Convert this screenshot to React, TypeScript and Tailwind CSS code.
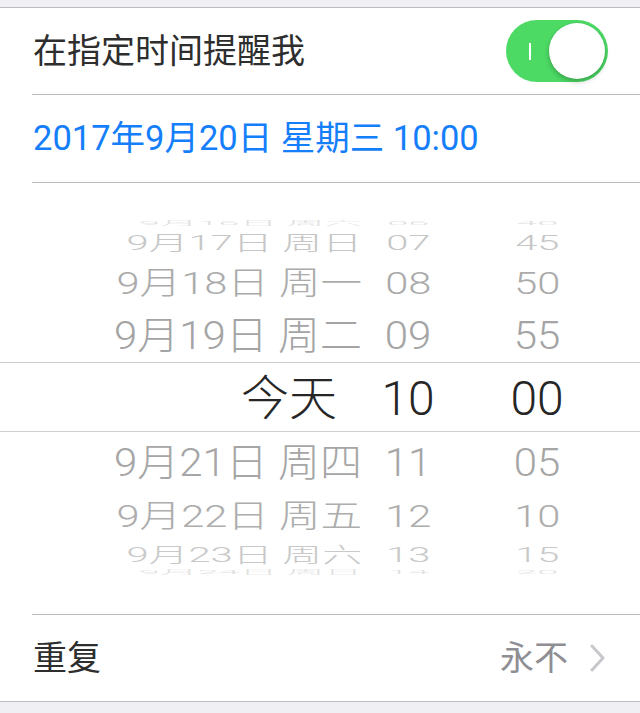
import React from "react";

type Row = {
  d: string;
  h: string;
  m: string;
  box: string;
  color: string;
  sx: string;
};

const top: Row[] = [
  { d: "9月16日 周六", h: "06", m: "40", box: "h-[8px]", color: "text-[#e0e0e0]", sx: "scale-x-[0.9] scale-y-[0.14]" },
  { d: "9月17日 周日", h: "07", m: "45", box: "h-[29px]", color: "text-[#c6c6c6]", sx: "scale-x-[0.95] scale-y-[0.5] translate-y-[1px]" },
  { d: "9月18日 周一", h: "08", m: "50", box: "h-[50px]", color: "text-[#ababab]", sx: "scale-x-[0.99] scale-y-[0.76] translate-y-[2px]" },
  { d: "9月19日 周二", h: "09", m: "55", box: "h-[56px]", color: "text-[#a4a4a4]", sx: "scale-x-[1] scale-y-[0.93] translate-y-[2px]" },
];

const bottom: Row[] = [
  { d: "9月21日 周四", h: "11", m: "05", box: "h-[57px]", color: "text-[#a6a6a6]", sx: "scale-x-[1] scale-y-[0.93] translate-y-[2px]" },
  { d: "9月22日 周五", h: "12", m: "10", box: "h-[50px]", color: "text-[#adadad]", sx: "scale-x-[0.99] scale-y-[0.76] translate-y-[2px]" },
  { d: "9月23日 周六", h: "13", m: "15", box: "h-[29px]", color: "text-[#c9c9c9]", sx: "scale-x-[0.95] scale-y-[0.5] translate-y-[1px]" },
  { d: "9月24日 周日", h: "14", m: "20", box: "h-[8px]", color: "text-[#e2e2e2]", sx: "scale-x-[0.9] scale-y-[0.14]" },
];

const FONT = "font-['Roboto','Noto_Sans_CJK_SC',sans-serif]";

function PickerRow({ r }: { r: Row }) {
  return (
    <div className={`${r.box} ${r.color} flex items-center text-[42px] leading-none font-light`}>
      <div className="w-[362px] flex justify-end">
        <span className={`inline-block origin-right whitespace-pre ${r.sx}`}>{r.d}</span>
      </div>
      <div className="w-[92px] flex justify-center">
        <span className={`inline-block origin-center ${r.sx}`}>{r.h}</span>
      </div>
      <div className="w-[166px] flex justify-center">
        <span className={`inline-block origin-center ${r.sx}`}>{r.m}</span>
      </div>
    </div>
  );
}

export default function App() {
  return (
    <div className={`w-[640px] h-[713px] bg-[#efeff4] overflow-hidden ${FONT}`}>
      <div className="h-[7px]" />
      <div className="bg-white border-y border-[#bcbbc1]">
        {/* Row 1 */}
        <div className="h-[86px] flex items-center justify-between pl-[33px] pr-[32px]">
          <span className="text-[34px] leading-none text-[#2e2e2e]">在指定时间提醒我</span>
          <div className="relative w-[102px] h-[62px] rounded-full bg-[#4cd964] flex items-center justify-end pr-[3px]">
            <div className="absolute left-[23px] top-[23px] w-[2px] h-[17px] bg-white" />
            <div className="w-[56px] h-[56px] rounded-full bg-white shadow-[0_3px_5px_rgba(0,0,0,0.22),0_0_0_0.5px_rgba(0,0,0,0.06)]" />
          </div>
        </div>
        <div className="ml-[32px] h-px bg-[#bcbbc1]" />
        {/* Row 2 */}
        <div className="h-[87px] flex items-center pl-[33px]">
          <span className="text-[34.5px] leading-none text-[#157efb] whitespace-pre">2017年9月20日 星期三 10:00</span>
        </div>
        <div className="ml-[32px] h-px bg-[#bcbbc1]" />
        {/* Picker */}
        <div className="h-[431px] pt-[36px] flex flex-col">
          {top.map((r) => (
            <PickerRow key={r.d} r={r} />
          ))}
          <div className="h-[70px] border-y border-[#cfcfcf] flex items-center text-[48px] leading-none font-light text-[#262626]">
            <div className="w-[362px] flex justify-end pr-[25px]">
              <span className="inline-block translate-y-[2px]">今天</span>
            </div>
            <div className="w-[92px] flex justify-center">
              <span className="inline-block translate-y-[2px]">10</span>
            </div>
            <div className="w-[166px] flex justify-center">
              <span className="inline-block translate-y-[2px]">00</span>
            </div>
          </div>
          {bottom.map((r) => (
            <PickerRow key={r.d} r={r} />
          ))}
        </div>
        <div className="ml-[32px] h-px bg-[#bcbbc1]" />
        {/* Row 3 */}
        <div className="h-[86px] flex items-center justify-between pl-[33px] pr-[34px]">
          <span className="text-[34px] leading-none text-[#2e2e2e]">重复</span>
          <div className="flex items-center gap-[22px]">
            <span className="text-[34px] leading-none text-[#8e8e93]">永不</span>
            <svg width="16" height="28" viewBox="0 0 16 28" fill="none">
              <polyline points="2,2 13,14 2,26" stroke="#c7c7cc" strokeWidth="3" strokeLinecap="round" strokeLinejoin="round" />
            </svg>
          </div>
        </div>
      </div>
    </div>
  );
}
